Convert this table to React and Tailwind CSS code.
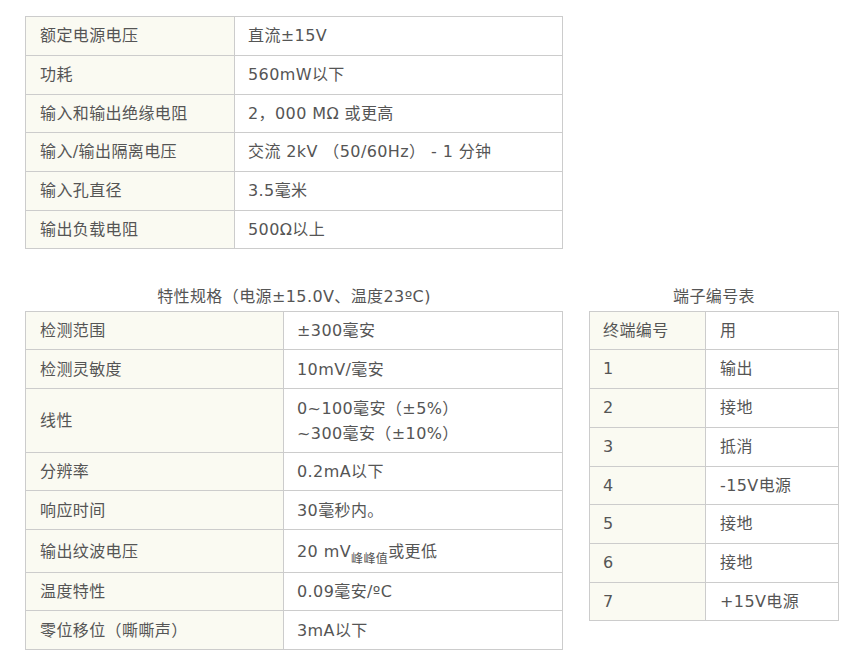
const basic = [
  ["额定电源电压", "直流±15V", "h-[39px]"],
  ["功耗", "560mW以下", "h-[39px]"],
  ["输入和输出绝缘电阻", "2，000 MΩ 或更高", "h-[38px]"],
  ["输入/输出隔离电压", "交流 2kV （50/60Hz） - 1 分钟", "h-[39px]"],
  ["输入孔直径", "3.5毫米", "h-[39px]"],
  ["输出负载电阻", "500Ω以上", "h-[38px]"],
];

const specs = [
  ["检测范围", "±300毫安", "h-[38px]"],
  ["检测灵敏度", "10mV/毫安", "h-[39px]"],
  [
    "线性",
    <>
      0~100毫安（±5%）
      <br />
      ~300毫安（±10%）
    </>,
    "h-[64px]",
  ],
  ["分辨率", "0.2mA以下", "h-[38px]"],
  ["响应时间", "30毫秒内。", "h-[39px]"],
  [
    "输出纹波电压",
    <>
      20 mV<sub className="text-[12px] align-[-3px]">峰峰值</sub>或更低
    </>,
    "h-[43px]",
  ],
  ["温度特性", "0.09毫安/ºC", "h-[38px]"],
  ["零位移位（嘶嘶声）", "3mA以下", "h-[39px]"],
];

const terminals = [
  ["终端编号", "用", "h-[38px]"],
  ["1", "输出", "h-[39px]"],
  ["2", "接地", "h-[39px]"],
  ["3", "抵消", "h-[39px]"],
  ["4", "-15V电源", "h-[38px]"],
  ["5", "接地", "h-[39px]"],
  ["6", "接地", "h-[39px]"],
  ["7", "+15V电源", "h-[38px]"],
];

const font = { fontFamily: '"DejaVu Sans", "Noto Sans CJK SC", sans-serif' };

export default function App() {
  return (
    <div
      className="min-h-[665px] w-[847px] bg-white pl-[25px] pt-[16px] text-[16px] tracking-[0.4px] text-[#555]"
      style={font}
    >
      <table className="w-[538px] border-collapse">
        <tbody>
          {basic.map(([k, v, h]) => (
            <tr key={k} className={h}>
              <td className="w-[209px] border border-[#ccc] bg-[#fafaf2] px-[14px] py-0 leading-[22px]">{k}</td>
              <td className="border border-[#ccc] px-[13px] py-0 leading-[22px]">{v}</td>
            </tr>
          ))}
        </tbody>
      </table>

      <div className="mt-[40px] flex items-start gap-[26px]">
        <div className="w-[538px]">
          <div className="h-[22px] text-center leading-[16px]">特性规格（电源±15.0V、温度23ºC)</div>
          <table className="w-full border-collapse">
            <tbody>
              {specs.map(([k, v, h]) => (
                <tr key={k} className={h}>
                  <td className="w-[258px] border border-[#ccc] bg-[#fafaf2] px-[14px] py-0 leading-[25px]">{k}</td>
                  <td className="border border-[#ccc] px-[13px] py-0 leading-[25px]">{v}</td>
                </tr>
              ))}
            </tbody>
          </table>
        </div>

        <div className="w-[250px]">
          <div className="h-[22px] text-center leading-[16px]">端子编号表</div>
          <table className="w-full border-collapse">
            <tbody>
              {terminals.map(([k, v, h]) => (
                <tr key={k} className={h}>
                  <td className="w-[116px] border border-[#ccc] bg-[#fafaf2] px-[13px] py-0 leading-[22px]">{k}</td>
                  <td className="border border-[#ccc] px-[14px] py-0 leading-[22px]">{v}</td>
                </tr>
              ))}
            </tbody>
          </table>
        </div>
      </div>
    </div>
  );
}
